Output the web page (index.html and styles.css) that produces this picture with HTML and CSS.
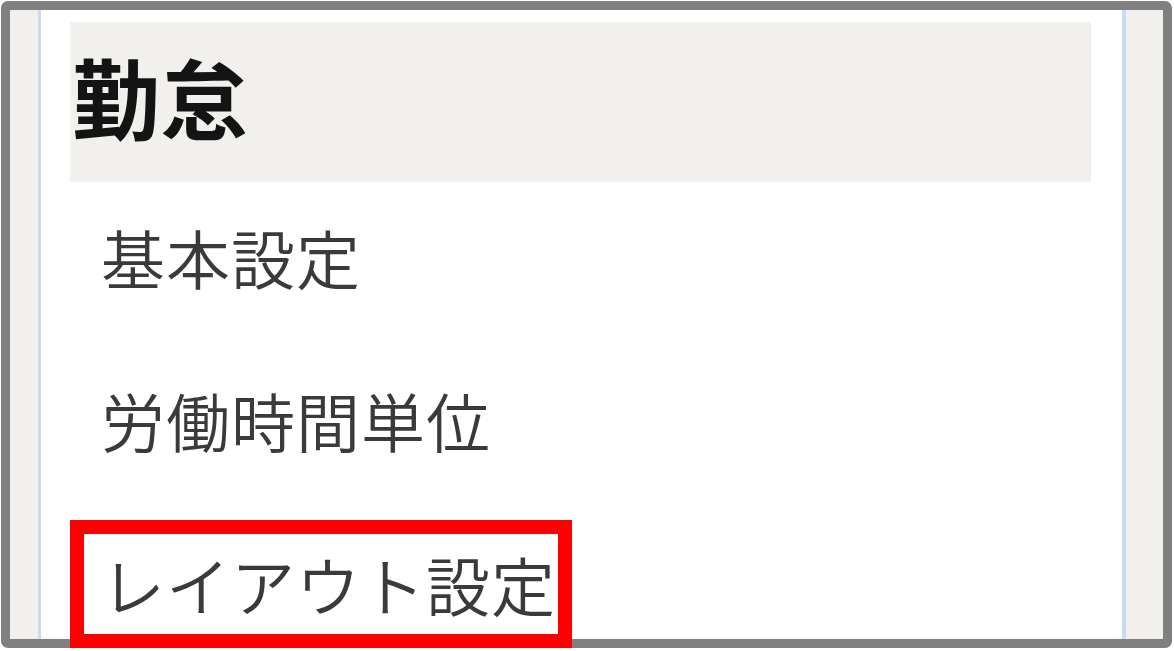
FILE: index.html
```html
<!DOCTYPE html>
<html lang="ja">
<head>
<meta charset="utf-8">
<link rel="stylesheet" href="styles.css">
</head>
<body>
<div class="frame">
  <div class="panel">
    <div class="section-title">勤怠</div>
    <ul class="menu">
      <li class="menu-item">基本設定</li>
      <li class="menu-item">労働時間単位</li>
      <li class="menu-item">レイアウト設定</li>
    </ul>
  </div>
</div>
<div class="highlight"></div>
</body>
</html>
```
FILE: styles.css
```css
html, body {
  margin: 0;
  padding: 0;
  background: #ffffff;
}
body {
  position: relative;
  width: 1174px;
  height: 651px;
  overflow: hidden;
  font-family: "Noto Sans CJK JP", "Noto Sans", sans-serif;
}
.frame {
  box-sizing: border-box;
  margin: 1px 2px 0 1px;
  width: 1171px;
  height: 647px;
  border: 9px solid #808080;
  border-radius: 7px;
  background: #f1f0ec;
  display: flex;
  overflow: hidden;
}
.panel {
  flex: 1;
  margin: 0 37px 0 28px;
  background: #ffffff;
  border-left: 3px solid #c7dcf2;
  border-right: 4px solid #c7dcf2;
  padding: 12px 31px 0 29px;
}
.section-title {
  height: 160px;
  background: #f1f0ec;
  font-size: 88px;
  font-weight: 700;
  color: #141414;
  line-height: 1;
  padding: 29px 0 0 2px;
  box-sizing: border-box;
}
.menu {
  list-style: none;
  margin: 0;
  padding: 0;
}
.menu-item {
  box-sizing: border-box;
  height: 163.5px;
  display: flex;
  align-items: center;
  padding: 0 0 16px 31px;
  font-size: 64px;
  font-weight: 350;
  letter-spacing: 1px;
  color: #3a3a3a;
  line-height: 1;
}
.highlight {
  position: absolute;
  left: 70px;
  top: 520px;
  width: 502px;
  height: 128px;
  box-sizing: border-box;
  border: 14px solid #ff0000;
}
```
